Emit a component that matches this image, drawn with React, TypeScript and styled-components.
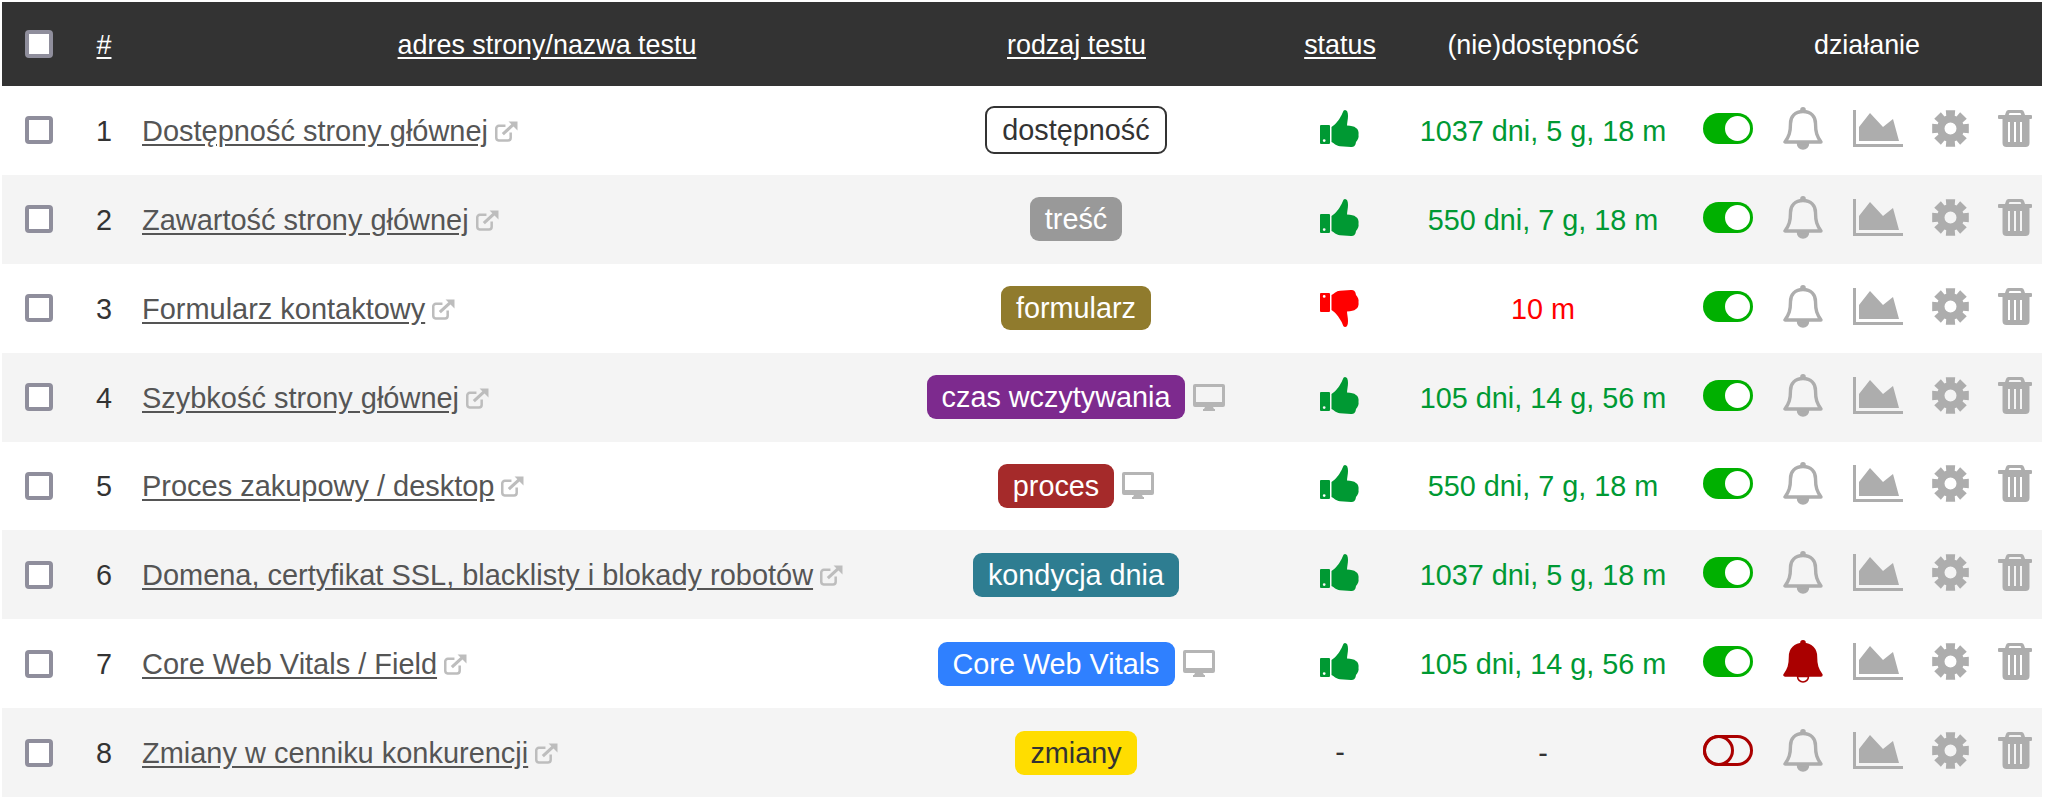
import styled, { createGlobalStyle } from "styled-components";

const GlobalStyle = createGlobalStyle`
  html, body {
    margin: 0;
    padding: 0;
    background: #fff;
    color: #333;
    font-family: "Liberation Sans", Arial, sans-serif;
    font-size: 28.8px;
  }
`;

const columns = "76px 52px 832px 318px 120px 286px 356px";

const Table = styled.div`
  margin: 2px 0 0 2px;
  width: 2040px;
`;

const HeadRow = styled.div`
  display: grid;
  grid-template-columns: ${columns};
  align-items: center;
  height: 84px;
  background: #333;
  color: #fff;
  font-size: 26.88px;
`;

const Row = styled.div<{ $odd: boolean }>`
  display: grid;
  grid-template-columns: ${columns};
  align-items: center;
  height: 88.875px;
  background: ${(p) => (p.$odd ? "#fff" : "#f4f4f4")};
`;

const HeadCell = styled.div<{ $sortable?: boolean; $pad?: number; $left?: number }>`
  text-align: center;
  padding-top: 2px;
  padding-right: ${(p) => p.$pad || 0}px;
  padding-left: ${(p) => p.$left || 0}px;
  text-decoration: ${(p) => (p.$sortable ? "underline" : "none")};
  text-underline-offset: 3px;
`;

const CheckCell = styled.div`
  display: flex;
  padding-left: 23px;
`;

const Check = styled.span`
  box-sizing: border-box;
  display: block;
  width: 28px;
  height: 28px;
  background: #fff;
  border: 4px solid #8f8e9c;
  border-radius: 4px;
`;

const Num = styled.div`
  text-align: center;
  padding-top: 2px;
`;

const NameCell = styled.div`
  display: flex;
  align-items: center;
  gap: 7px;
  padding-left: 12px;
  padding-top: 2px;
`;

const NameLink = styled.a`
  color: #555;
  font-size: 28.96px;
  text-decoration: underline;
  text-underline-offset: 3px;
  white-space: nowrap;
`;

const ExternalBox = styled.svg`
  display: block;
  flex-shrink: 0;
`;

const TypeCell = styled.div`
  display: flex;
  align-items: center;
  justify-content: center;
  gap: 8px;
  padding-right: 90px;
`;

const Tag = styled.span<{ $bg: string; $fg?: string; $outlined?: boolean }>`
  display: block;
  flex-shrink: 0;
  padding: 0 15px;
  line-height: 44px;
  border-radius: 9px;
  white-space: nowrap;
  background: ${(p) => p.$bg};
  color: ${(p) => p.$fg || "#fff"};
  border: ${(p) => (p.$outlined ? "2px solid #333" : "none")};
`;

const DesktopBox = styled.svg`
  display: block;
  flex-shrink: 0;
`;

const StatusCell = styled.div`
  display: flex;
  justify-content: center;
`;

const Avail = styled.div<{ $color: string }>`
  text-align: center;
  padding-top: 2px;
  color: ${(p) => p.$color};
  white-space: nowrap;
`;

const Actions = styled.div`
  display: flex;
  align-items: center;
  padding-left: 17px;
`;

const ToggleBox = styled.svg`
  display: block;
  margin-right: 30px;
  margin-top: -4px;
`;

const BellBox = styled.svg`
  display: block;
  margin-right: 30px;
  margin-top: -4px;
`;

const ChartBox = styled.svg`
  display: block;
  margin-right: 29px;
  margin-top: -4px;
`;

const CogBox = styled.svg`
  display: block;
  margin-right: 29px;
  margin-top: -4px;
`;

const TrashBox = styled.svg`
  display: block;
  margin-top: -4px;
`;

const ThumbBox = styled.svg<{ $down?: boolean }>`
  display: block;
  margin-top: ${(p) => (p.$down ? 1 : -4)}px;
  transform: ${(p) => (p.$down ? "none" : "scaleY(-1)")};
`;

const GREY = "#adadad";

const Thumb = ({ down }: { down?: boolean }) => (
  <ThumbBox $down={down} width="40" height="37" viewBox="0 0 40 37">
    <path
      fill={down ? "#ff0000" : "#009933"}
      fillRule="evenodd"
      d="M1 3h8a1 1 0 0 1 1 1v17a1 1 0 0 1-1 1H1a1 1 0 0 1-1-1V4a1 1 0 0 1 1-1zM4.200 5a1.400 1.400 0 1 0 0 2.800 1.400 1.400 0 0 0 0-2.800zM11.500 5C14 4 16 1 20 .8L31 0c3 0 4.500 1 5 5 2 2 3 5 2.500 7 .5 3-.5 6-2.500 7-2 2-5 2-9 2.500 0 2.500 1 6.500 1 9.500 0 4-1 6-3 6s-2-3-4-6c-2-4-6-9-9.500-11z"
    />
  </ThumbBox>
);

const ExternalIcon = () => (
  <ExternalBox width="23" height="21" viewBox="0 0 22 20" fill="none" stroke="#bdbdbd" strokeWidth="2.400">
    <path d="M15 11v5a2.500 2.500 0 0 1-2.500 2.500h-9A2.500 2.500 0 0 1 1.200 16V7a2.500 2.500 0 0 1 2.500-2.500H10" />
    <path d="M7.500 12.500 19 2" strokeWidth="3" />
    <path d="M13 .5h8.500V9z" fill="#bdbdbd" stroke="none" />
  </ExternalBox>
);

const Desktop = () => (
  <DesktopBox width="32" height="27" viewBox="0 0 32 27">
    <path
      fill="#b5b5b5"
      fillRule="evenodd"
      d="M2 0h28a2 2 0 0 1 2 2v19a2 2 0 0 1-2 2H2a2 2 0 0 1-2-2V2a2 2 0 0 1 2-2zm1 3v15h26V3zM12 23h8l1 2h1v2H10v-2h1z"
    />
  </DesktopBox>
);

const Toggle = ({ on }: { on: boolean }) => (
  <ToggleBox width="50" height="31" viewBox="0 0 50 31">
    {on ? (
      <>
        <rect x="0" y="0" width="50" height="31" rx="15.500" fill="#00b000" />
        <circle cx="34.500" cy="15.500" r="12.500" fill="#fff" />
      </>
    ) : (
      <g fill="none" stroke="#aa0000" strokeWidth="3">
        <rect x="1.500" y="1.500" width="47" height="28" rx="14" />
        <circle cx="15.500" cy="15.500" r="14" />
      </g>
    )}
  </ToggleBox>
);

const Bell = ({ active }: { active: boolean }) => {
  const color = active ? "#aa0000" : GREY;
  return (
    <BellBox width="40" height="43" viewBox="0 0 40 43">
      <path
        d="M20 4.500c-8 0-12.500 5-12.500 12 0 9-1.500 13-5.500 18.500h36c-4-5.500-5.500-9.500-5.500-18.500 0-7-4.500-12-12.500-12z"
        fill={active ? color : "none"}
        stroke={color}
        strokeWidth="3.400"
        strokeLinejoin="round"
      />
      <circle cx="20" cy="2.800" r="2.800" fill={color} />
      <path d="M14.500 36.500a5.500 5.500 0 0 0 11 0z" fill={active ? "#fff" : color} stroke={color} strokeWidth="1.500" />
    </BellBox>
  );
};

const AreaChart = () => (
  <ChartBox width="50" height="37" viewBox="0 0 50 37">
    <path fill={GREY} d="M0 0h3v34h47v3H0zM6 31V17L17 3l13 14 10-8 6 22z" />
  </ChartBox>
);

// eight teeth round the wheel, with a hole in the middle
const cogPath = () => {
  const c = 18.5;
  const pts: string[] = [];
  for (let i = 0; i < 8; i++) {
    const a = (i * Math.PI) / 4 - Math.PI / 2;
    const spots: [number, number][] = [
      [13.5, -0.32],
      [18.9, -0.25],
      [18.9, 0.25],
      [13.5, 0.32],
    ];
    spots.forEach(([r, d]) => {
      pts.push(`${(c + r * Math.cos(a + d)).toFixed(2)} ${(c + r * Math.sin(a + d)).toFixed(2)}`);
    });
  }
  return `M${pts.join("L")}zM${c - 6} ${c}a6 6 0 1 0 12 0a6 6 0 1 0-12 0z`;
};

const Cog = () => (
  <CogBox width="37" height="37" viewBox="0 0 37 37">
    <path fill={GREY} fillRule="evenodd" d={cogPath()} />
  </CogBox>
);

const Trash = () => (
  <TrashBox width="34" height="37" viewBox="0 0 34 37">
    <path
      fill={GREY}
      fillRule="evenodd"
      d="M11 0h12a3 3 0 0 1 3 2l1 3h6a1 1 0 0 1 1 1v2a1 1 0 0 1-1 1h-1.500v24a4 4 0 0 1-4 4h-19a4 4 0 0 1-4-4V9H1a1 1 0 0 1-1-1V6a1 1 0 0 1 1-1h6l1-3a3 3 0 0 1 3-2zm.5 3-.8 2h12.600l-.8-2zM10 12v20h2V12zm6 0v20h2V12zm6 0v20h2V12z"
    />
  </TrashBox>
);

type TestRow = {
  name: string;
  tag: string;
  bg: string;
  fg?: string;
  outlined?: boolean;
  desktop?: boolean;
  status: "up" | "down" | "none";
  avail: string;
  bellOn?: boolean;
  off?: boolean;
};

const tests: TestRow[] = [
  { name: "Dostępność strony głównej", tag: "dostępność", bg: "#fff", fg: "#333", outlined: true, status: "up", avail: "1037 dni, 5 g, 18 m" },
  { name: "Zawartość strony głównej", tag: "treść", bg: "#999", status: "up", avail: "550 dni, 7 g, 18 m" },
  { name: "Formularz kontaktowy", tag: "formularz", bg: "#907b2d", status: "down", avail: "10 m" },
  { name: "Szybkość strony głównej", tag: "czas wczytywania", bg: "#7d2a8e", desktop: true, status: "up", avail: "105 dni, 14 g, 56 m" },
  { name: "Proces zakupowy / desktop", tag: "proces", bg: "#a52a2a", desktop: true, status: "up", avail: "550 dni, 7 g, 18 m" },
  { name: "Domena, certyfikat SSL, blacklisty i blokady robotów", tag: "kondycja dnia", bg: "#2e7d91", status: "up", avail: "1037 dni, 5 g, 18 m" },
  { name: "Core Web Vitals / Field", tag: "Core Web Vitals", bg: "#2f80ff", desktop: true, status: "up", avail: "105 dni, 14 g, 56 m", bellOn: true },
  { name: "Zmiany w cenniku konkurencji", tag: "zmiany", bg: "#ffdd00", fg: "#333", status: "none", avail: "-", off: true },
];

const availColor = (status: TestRow["status"]) => {
  if (status === "up") return "#009933";
  if (status === "down") return "#ff0000";
  return "#333";
};

const App = () => (
  <>
    <GlobalStyle />
    <Table>
      <HeadRow>
        <CheckCell>
          <Check />
        </CheckCell>
        <HeadCell $sortable>#</HeadCell>
        <HeadCell $sortable $left={2}>adres strony/nazwa testu</HeadCell>
        <HeadCell $sortable $pad={89}>rodzaj testu</HeadCell>
        <HeadCell $sortable>status</HeadCell>
        <HeadCell>(nie)dostępność</HeadCell>
        <HeadCell $left={6}>działanie</HeadCell>
      </HeadRow>
      {tests.map((t, i) => (
        <Row key={t.name} $odd={i % 2 === 0}>
          <CheckCell>
            <Check />
          </CheckCell>
          <Num>{i + 1}</Num>
          <NameCell>
            <NameLink href="#">{t.name}</NameLink>
            <ExternalIcon />
          </NameCell>
          <TypeCell>
            <Tag $bg={t.bg} $fg={t.fg} $outlined={t.outlined}>
              {t.tag}
            </Tag>
            {t.desktop && <Desktop />}
          </TypeCell>
          <StatusCell>
            {t.status === "none" ? "-" : <Thumb down={t.status === "down"} />}
          </StatusCell>
          <Avail $color={availColor(t.status)}>{t.avail}</Avail>
          <Actions>
            <Toggle on={!t.off} />
            <Bell active={!!t.bellOn} />
            <AreaChart />
            <Cog />
            <Trash />
          </Actions>
        </Row>
      ))}
    </Table>
  </>
);

export default App;
